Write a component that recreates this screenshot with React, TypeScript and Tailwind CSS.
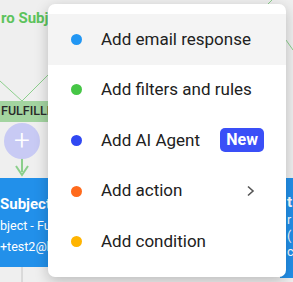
const items = [
  { id: 1, label: "Add email response", dot: "bg-[#2196f3]", active: true },
  { id: 2, label: "Add filters and rules", dot: "bg-[#46c646]" },
  { id: 3, label: "Add AI Agent", dot: "bg-[#3048f2]", badge: "New" },
  { id: 4, label: "Add action", dot: "bg-[#ff6a1c]", submenu: true },
  { id: 5, label: "Add condition", dot: "bg-[#ffb400]" },
];

function Canvas() {
  return (
    <div className="absolute inset-0 bg-[#efefef]">
      <svg className="absolute inset-0" width="293" height="282">
        <line x1="0" y1="81" x2="22" y2="101" stroke="#8ccf8c" strokeWidth="1" />
        <line x1="22" y1="101" x2="50" y2="73" stroke="#8ccf8c" strokeWidth="1" />
        <line x1="268" y1="4" x2="276" y2="-4" stroke="#8ccf8c" strokeWidth="1" />
        <line x1="286" y1="40" x2="293" y2="50" stroke="#8ccf8c" strokeWidth="1" />
        <line x1="22" y1="158" x2="22" y2="172" stroke="#8ccf8c" strokeWidth="2" />
        <path d="M16 166 L22 175 L28 166" fill="none" stroke="#8ccf8c" strokeWidth="2" />
        <line x1="22" y1="267" x2="22" y2="282" stroke="#c4c4c4" strokeWidth="1" />
      </svg>
      <div className="absolute left-[1px] top-[7px] text-[15px] font-bold text-[#5cc35c]">
        ro Subject
      </div>
      <div className="absolute left-0 top-[101px] flex h-[21px] w-[80px] items-center bg-[#a3d4a0] pl-[1px] text-[12.5px] font-medium text-[#2a2a2a]">
        FULFILLED
      </div>
      <div className="absolute left-[4px] top-[123px] flex h-[36px] w-[36px] items-center justify-center rounded-full bg-[#c8caf4] text-[28px] leading-none font-light text-white">
        +
      </div>
      <div className="absolute left-[-20px] top-[178px] flex h-[89px] w-[120px] flex-col bg-[#2290ea] pl-[20px] pt-[16px] text-white">
        <div className="text-[15px] font-bold leading-5">Subject</div>
        <div className="mt-[2px] text-[12.5px] leading-5">bject - Fu</div>
        <div className="mt-[1px] text-[12.5px] leading-5">+test2@l</div>
      </div>
      <div className="absolute left-[280px] top-[178px] flex h-[100px] w-[13px] flex-col overflow-hidden bg-[#2290ea] pl-[7px] pt-[14px] text-white">
        <div className="text-[15px] font-bold leading-5">t</div>
        <div className="text-[12.5px] leading-4">r</div>
        <div className="text-[12.5px] leading-4">(</div>
        <div className="text-[12.5px] leading-4">c</div>
      </div>
    </div>
  );
}

export default function App() {
  return (
    <div className="relative h-[282px] w-[293px] overflow-hidden font-['Roboto',sans-serif]">
      <Canvas />
      <div className="absolute left-[48px] top-[4px] w-[238px] rounded-[7px] bg-white py-[10px] shadow-[0_4px_14px_rgba(0,0,0,0.22)]">
        {items.map((item) => (
          <div
            key={item.id}
            className={`flex h-[50.6px] items-center pl-[23px] pr-[22px] ${item.active ? "bg-[#f4f4f4]" : ""}`}
          >
            <span className={`h-[11px] w-[11px] rounded-full ${item.dot}`} />
            <span className="ml-[19px] text-[17px] text-[#212121]">{item.label}</span>
            {item.badge && (
              <span className="ml-auto rounded-[5px] bg-[#3a4ff7] px-[6px] py-[1px] text-[16px] font-bold leading-[22px] text-white">
                {item.badge}
              </span>
            )}
            {item.submenu && (
              <svg className="ml-auto mr-[9px]" width="9" height="12" viewBox="0 0 9 12">
                <path d="M2 1.5 L7 6 L2 10.5" fill="none" stroke="#555" strokeWidth="1.6" />
              </svg>
            )}
          </div>
        ))}
      </div>
    </div>
  );
}
